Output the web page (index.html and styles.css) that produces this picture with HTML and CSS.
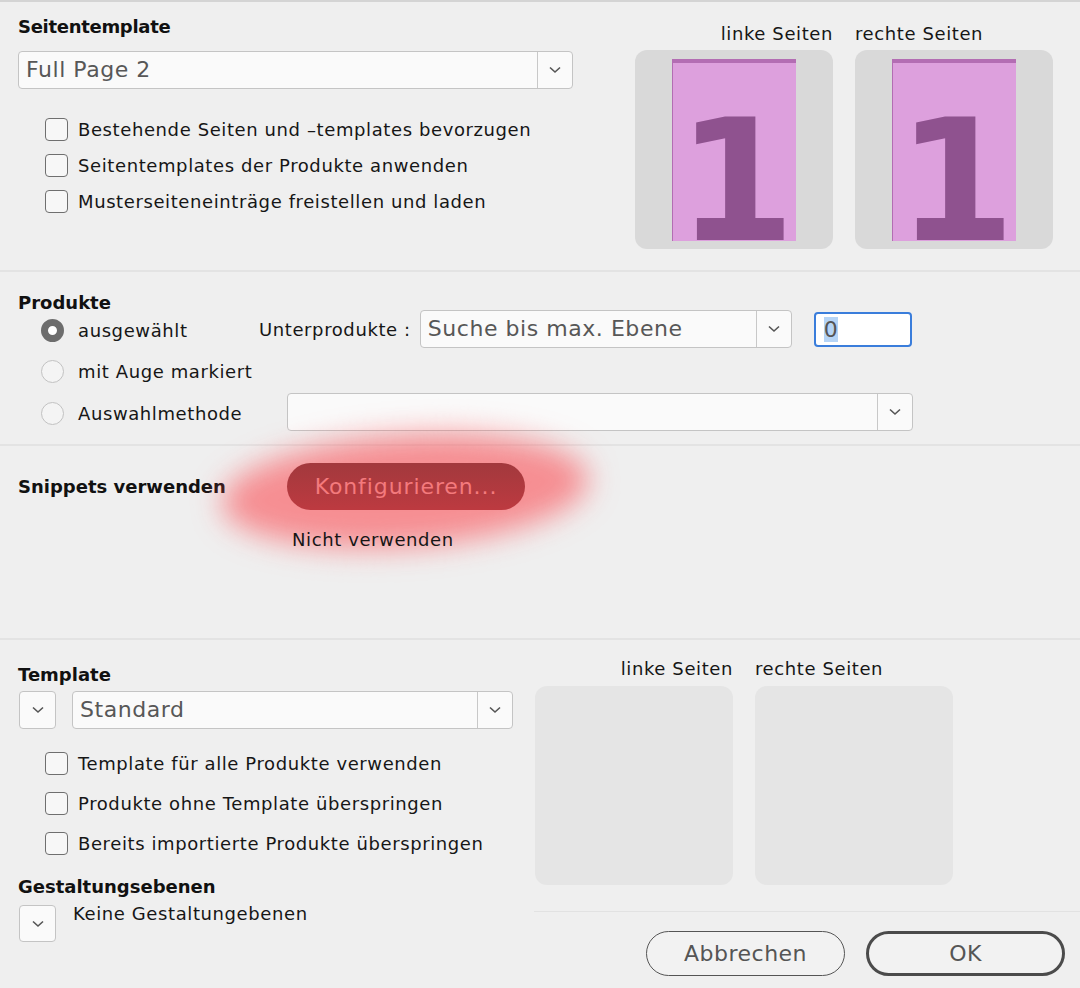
FILE: index.html
```html
<!DOCTYPE html>
<html lang="de">
<head>
    <meta charset="UTF-8">
    <title>Seitentemplate</title>
    <link rel="stylesheet" href="styles.css">
</head>
<body>
    <div class="dialog">
        <section class="sec sec-page">
            <div class="page-left">
                <h2>Seitentemplate</h2>
                <div class="combo combo-page">
                    <span class="combo-text">Full Page 2</span>
                    <span class="combo-btn"><svg width="12" height="8" viewBox="0 0 12 8"><polyline points="1,1.5 6,6 11,1.5" /></svg></span>
                </div>
                <ul class="checks">
                    <li><span class="cb"></span>Bestehende Seiten und –templates bevorzugen</li>
                    <li><span class="cb"></span>Seitentemplates der Produkte anwenden</li>
                    <li><span class="cb"></span>Musterseiteneinträge freistellen und laden</li>
                </ul>
            </div>
            <div class="previews">
                <div class="pv-label left">linke Seiten</div>
                <div class="pv-label">rechte Seiten</div>
                <div class="pv-box"><div class="page"><span>1</span></div></div>
                <div class="pv-box"><div class="page"><span>1</span></div></div>
            </div>
        </section>

        <section class="sec sec-products">
            <h2>Produkte</h2>
            <div class="prod-row">
                <label class="radio-item short"><span class="radio checked"></span>ausgewählt</label>
                <span class="sub-label">Unterprodukte :</span>
                <div class="combo combo-sub">
                    <span class="combo-text">Suche bis max. Ebene</span>
                    <span class="combo-btn"><svg width="12" height="8" viewBox="0 0 12 8"><polyline points="1,1.5 6,6 11,1.5" /></svg></span>
                </div>
                <div class="num-input"><span class="sel">0</span></div>
            </div>
            <div class="prod-row">
                <label class="radio-item"><span class="radio"></span>mit Auge markiert</label>
            </div>
            <div class="prod-row">
                <label class="radio-item"><span class="radio"></span>Auswahlmethode</label>
                <div class="combo combo-method">
                    <span class="combo-text"></span>
                    <span class="combo-btn"><svg width="12" height="8" viewBox="0 0 12 8"><polyline points="1,1.5 6,6 11,1.5" /></svg></span>
                </div>
            </div>
        </section>

        <section class="sec sec-snippets">
            <div class="snip-grid">
                <h2 class="snip-title">Snippets verwenden</h2>
                <div class="snip-btn-wrap">
                    <div class="glow"></div>
                    <button class="btn-config">Konfigurieren...</button>
                </div>
                <span></span>
                <div class="snip-state">Nicht verwenden</div>
            </div>
        </section>

        <section class="sec sec-template">
            <div class="tpl-left">
                <h2>Template</h2>
                <div class="tpl-combo-row">
                    <span class="mini-drop"><svg width="12" height="8" viewBox="0 0 12 8"><polyline points="1,1.5 6,6 11,1.5" /></svg></span>
                    <div class="combo combo-tpl">
                        <span class="combo-text">Standard</span>
                        <span class="combo-btn"><svg width="12" height="8" viewBox="0 0 12 8"><polyline points="1,1.5 6,6 11,1.5" /></svg></span>
                    </div>
                </div>
                <ul class="checks tpl-checks">
                    <li><span class="cb"></span>Template für alle Produkte verwenden</li>
                    <li><span class="cb"></span>Produkte ohne Template überspringen</li>
                    <li><span class="cb"></span>Bereits importierte Produkte überspringen</li>
                </ul>
                <h2 class="layers-title">Gestaltungsebenen</h2>
                <div class="layers-row">
                    <span class="mini-drop"><svg width="12" height="8" viewBox="0 0 12 8"><polyline points="1,1.5 6,6 11,1.5" /></svg></span>
                    <span class="layers-text">Keine Gestaltungebenen</span>
                </div>
            </div>
            <div class="tpl-right">
                <div class="previews empty">
                    <div class="pv-label left">linke Seiten</div>
                    <div class="pv-label">rechte Seiten</div>
                    <div class="pv-box"></div>
                    <div class="pv-box"></div>
                </div>
                <div class="actions">
                    <button class="btn">Abbrechen</button>
                    <button class="btn btn-ok">OK</button>
                </div>
            </div>
        </section>
    </div>
</body>
</html>
```

FILE: styles.css
```css
* {
    box-sizing: border-box;
}
body {
    margin: 0;
    background-color: #efefef;
    font-family: "DejaVu Sans", "Liberation Sans", sans-serif;
    font-size: 18px;
    letter-spacing: 0.6px;
    color: #161616;
}
.dialog {
    width: 1080px;
    height: 988px;
    border-top: 2px solid #d4d4d4;
    overflow: hidden;
}
h2 {
    margin: 0;
    font-size: 18px;
    line-height: 22px;
    font-weight: bold;
    letter-spacing: 0;
    color: #111;
}
.sec {
    border-bottom: 2px solid #e3e3e3;
}

/* combo boxes */
.combo {
    display: flex;
    align-items: stretch;
    height: 38px;
    background-color: #fafafa;
    border: 1.5px solid #c4c4c4;
    border-radius: 4px;
}
.combo-text {
    flex: 1;
    padding-left: 7px;
    font-size: 22px;
    letter-spacing: 0.55px;
    line-height: 35px;
    color: #575757;
    white-space: nowrap;
    overflow: hidden;
}
.combo-btn {
    width: 35px;
    display: flex;
    align-items: center;
    justify-content: center;
    border-left: 1.5px solid #c8c8c8;
}
.combo-btn svg, .mini-drop svg {
    fill: none;
    stroke: #555;
    stroke-width: 1.6;
}

/* checkboxes */
.checks {
    list-style: none;
    margin: 0;
    padding: 0 0 0 27px;
}
.checks li {
    display: flex;
    align-items: center;
    height: 36px;
    gap: 10px;
    white-space: nowrap;
}
.cb {
    width: 23px;
    height: 23px;
    border: 1.5px solid #6f6f6f;
    border-radius: 4px;
    background-color: #f7f7f7;
    flex: none;
}

/* section 1 */
.sec-page {
    height: 270px;
    display: flex;
    justify-content: space-between;
    padding: 14px 27px 0 18px;
}
.page-left {
    width: 555px;
}
.page-left h2 {
    letter-spacing: -0.3px;
}
.combo-page {
    margin-top: 13px;
}
.sec-page .checks {
    margin-top: 22px;
}
.previews {
    display: grid;
    grid-template-columns: 198px 198px;
    column-gap: 22px;
    row-gap: 5px;
    margin-top: 7px;
    align-self: flex-start;
}
.pv-label {
    line-height: 22px;
    white-space: nowrap;
}
.pv-label.left {
    text-align: right;
}
.pv-box {
    height: 199px;
    background-color: #d9d9d9;
    border-radius: 12px;
    display: flex;
    justify-content: center;
    padding-top: 9px;
}
.page {
    width: 124px;
    height: 182px;
    background-color: #dda0dd;
    border-top: 4px solid #b36db3;
    border-left: 1px solid #b36db3;
    position: relative;
}
.page span {
    position: absolute;
    left: 4px;
    top: 33px;
    font-family: "DejaVu Sans", sans-serif;
    font-weight: bold;
    font-size: 170px;
    line-height: 170px;
    letter-spacing: 0;
    color: #8f528f;
}

/* section 2 */
.sec-products {
    height: 174px;
    padding: 20px 0 0 18px;
}
.sec-products h2 {
    margin-bottom: -5px;
}
.prod-row {
    display: flex;
    align-items: center;
    height: 42px;
    padding-left: 23px;
}
.prod-row:first-of-type {
    height: 40px;
}
.radio-item {
    display: flex;
    align-items: center;
    gap: 14px;
    width: 246px;
    white-space: nowrap;
    padding-top: 3px;
}
.radio-item.short {
    width: 218px;
}
.radio {
    width: 23px;
    height: 23px;
    border-radius: 50%;
    border: 1.5px solid #c2c2c2;
    background-color: #f4f4f4;
    flex: none;
}
.radio.checked {
    border: 7.5px solid #6d6d6d;
    background-color: #fff;
}
.sub-label {
    white-space: nowrap;
    margin-right: 9px;
}
.combo-sub {
    width: 372px;
}
.num-input {
    width: 98px;
    height: 35px;
    margin-left: 22px;
    border: 2px solid #3a7ddb;
    border-radius: 4px;
    background-color: #fff;
    font-size: 22px;
    line-height: 31px;
    color: #555;
    padding-left: 8px;
}
.num-input .sel {
    background-color: #b5d4f6;
}
.combo-method {
    width: 626px;
}

/* section 3 */
.sec-snippets {
    height: 194px;
    padding: 17px 0 0 18px;
}
.snip-grid {
    display: grid;
    grid-template-columns: 269px auto;
    align-items: center;
    justify-content: start;
}
.snip-btn-wrap {
    position: relative;
}
.glow {
    position: absolute;
    left: -66px;
    top: -28px;
    width: 368px;
    height: 112px;
    border-radius: 50%;
    background-color: rgba(250, 82, 88, 0.62);
    filter: blur(15px);
    transform: rotate(-4deg);
}
.btn-config {
    position: relative;
    width: 238px;
    height: 47px;
    border: none;
    border-radius: 24px;
    background: linear-gradient(#a2393d, #bd3a40);
    color: #f47a7d;
    font-family: "DejaVu Sans", sans-serif;
    font-size: 22px;
    letter-spacing: 0.9px;
}
.snip-state {
    margin-top: 19px;
    padding-left: 5px;
    line-height: 22px;
    position: relative;
}

/* section 4 */
.sec-template {
    border-bottom: none;
    height: 346px;
    display: flex;
    justify-content: space-between;
}
.tpl-left {
    width: 513px;
    padding: 24px 0 0 18px;
}
.tpl-combo-row {
    display: flex;
    gap: 16px;
    margin-top: 5px;
}
.mini-drop {
    width: 37px;
    height: 38px;
    margin-left: 1px;
    display: flex;
    align-items: center;
    justify-content: center;
    background-color: #fafafa;
    border: 1.5px solid #c4c4c4;
    border-radius: 4px;
    flex: none;
}
.combo-tpl {
    flex: 1;
}
.tpl-checks {
    margin-top: 14px;
}
.tpl-checks li {
    height: 40px;
}
.layers-title {
    margin-top: 13px;
}
.layers-row {
    display: flex;
    align-items: flex-start;
    gap: 17px;
    margin-top: 7px;
}
.layers-row .mini-drop {
    height: 37px;
}
.layers-text {
    line-height: 22px;
    margin-top: -2px;
}
.tpl-right {
    width: 546px;
    padding-top: 18px;
}
.previews.empty {
    margin-top: 0;
    padding-left: 1px;
    row-gap: 6px;
}
.previews.empty .pv-box {
    background-color: #e5e5e5;
}
.actions {
    margin-top: 26px;
    border-top: 1.5px solid #e2e2e2;
    padding: 19px 15px 0 0;
    display: flex;
    justify-content: flex-end;
    gap: 21px;
}
.btn {
    width: 199px;
    height: 45px;
    border: 1.5px solid #555;
    border-radius: 23px;
    background-color: #f2f2f2;
    color: #555;
    font-family: "DejaVu Sans", sans-serif;
    font-size: 22px;
    letter-spacing: 0.5px;
}
.btn-ok {
    border: 3px solid #4b4b4b;
}
```
